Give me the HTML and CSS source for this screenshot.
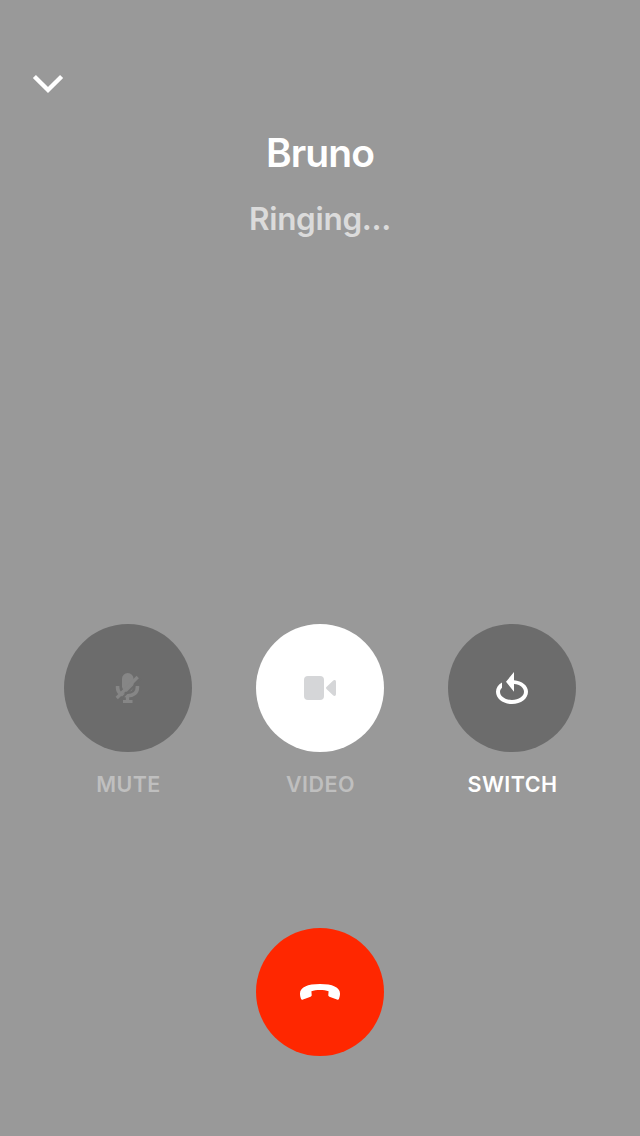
FILE: index.html
```html
<!DOCTYPE html>
<html lang="en">
<head>
<meta charset="utf-8">
<title>Call</title>
<link rel="stylesheet" href="styles.css">
</head>
<body>
<main class="call">
  <button class="minimize" aria-label="Minimize">
    <svg width="32" height="24" viewBox="0 0 32 24"><path d="M2.4 4.5 16 18 29.6 4.5" fill="none" stroke="#fff" stroke-width="4.4"/></svg>
  </button>
  <header class="caller">
    <h1 class="name">Bruno</h1>
    <p class="status">Ringing...</p>
  </header>
  <section class="controls">
    <div class="control dim">
      <button class="circle dark" aria-label="Mute">
        <svg width="48" height="48" viewBox="0 0 48 48">
          <g fill="none" stroke="#868686">
            <path d="M13.600 22v1.500c0 5.200 4 8.300 9.900 8.300s9.900-3.100 9.900-8.300V22" stroke-width="3.600"/>
            <path d="M23.500 31v7" stroke-width="3.400"/>
            <path d="M19 37.500h9.500" stroke-width="3"/>
          </g>
          <rect x="18" y="9" width="11.500" height="19" rx="5.700" fill="#868686"/>
          <path d="M16 36 37 15" stroke="#6c6c6c" stroke-width="1.800"/>
          <path d="M12.700 34 33.700 13" stroke="#868686" stroke-width="3.300"/>
        </svg>
      </button>
      <span class="label">MUTE</span>
    </div>
    <div class="control dim">
      <button class="circle light" aria-label="Video">
        <svg width="48" height="48" viewBox="0 0 48 48" fill="#d5d6d8"><rect x="8" y="12" width="20" height="24" rx="4"/><path d="M30.700 22.800 37 16.700c1.300-1.200 3-.7 3 1.200v12.200c0 1.900-1.700 2.400-3 1.200l-6.300-6.100c-.9-.8-.9-1.600 0-2.400z"/></svg>
      </button>
      <span class="label">VIDEO</span>
    </div>
    <div class="control">
      <button class="circle dark" aria-label="Switch">
        <svg width="48" height="48" viewBox="0 0 48 48" fill="#fff"><path d="M26 8v8.200c8 .5 14 5.300 14 11.600C40 34.800 33 40 24 40S8 34.800 8 27.800c0-3.700 2.200-7 6-9.200v5.200c-1.300 1.200-2 2.500-2 4 0 4.600 5.200 8.200 12 8.200s12-3.600 12-8.200c0-4.300-4-7.400-10-7.900v7.800l-8-9.900z"/></svg>
      </button>
      <span class="label">SWITCH</span>
    </div>
  </section>
  <button class="circle hangup" aria-label="End call">
    <svg width="48" height="24" viewBox="0 0 48 24"><path d="M24 4C11.500 4 4 7.300 4 13.500c0 1.900.4 3.800 1 5.200.4 1 1 1.200 2 .8l7.600-2.800c.8-.3 1.200-.8 1.100-1.600l-.3-3.800c2.400-.8 5.300-1.200 8.600-1.200s6.200.4 8.600 1.200l-.3 3.800c-.1.8.3 1.300 1.100 1.600l7.600 2.800c1 .4 1.600.2 2-.8.6-1.400 1-3.300 1-5.200C44 7.300 36.500 4 24 4z" fill="#fff"/></svg>
  </button>
</main>
</body>
</html>
```
FILE: styles.css
```css
* { box-sizing: border-box; margin: 0; padding: 0; }
body { background: #999; font-family: Inter, "Liberation Sans", sans-serif; }
button { border: 0; background: none; display: block; }
svg { display: block; }
.call {
  width: 640px;
  height: 1136px;
  padding-top: 72px;
  display: flex;
  flex-direction: column;
  align-items: center;
  color: #fff;
}
.minimize { align-self: flex-start; margin-left: 32px; }
.caller {
  height: 528px;
  padding-top: 33px;
  display: flex;
  flex-direction: column;
  align-items: center;
}
.name {
  font-size: 39px;
  line-height: 48px;
  font-weight: 600;
  letter-spacing: -0.9px;
}
.status {
  margin-top: 22px;
  font-size: 31.5px;
  line-height: 40px;
  font-weight: 600;
  letter-spacing: -0.3px;
  color: #dbdbdb;
}
.controls { display: flex; gap: 64px; height: 304px; }
.control {
  width: 128px;
  display: flex;
  flex-direction: column;
  align-items: center;
}
.circle {
  width: 128px;
  height: 128px;
  border-radius: 50%;
  display: flex;
  align-items: center;
  justify-content: center;
}
.dark { background: #6c6c6c; }
.light { background: #fff; }
.hangup { background: #ff2700; }
.label {
  margin-top: 18px;
  padding-left: 1px;
  font-size: 21.5px;
  line-height: 28px;
  font-weight: 600;
  letter-spacing: 0.45px;
}
.dim .label { color: #bfbfbf; }
```
